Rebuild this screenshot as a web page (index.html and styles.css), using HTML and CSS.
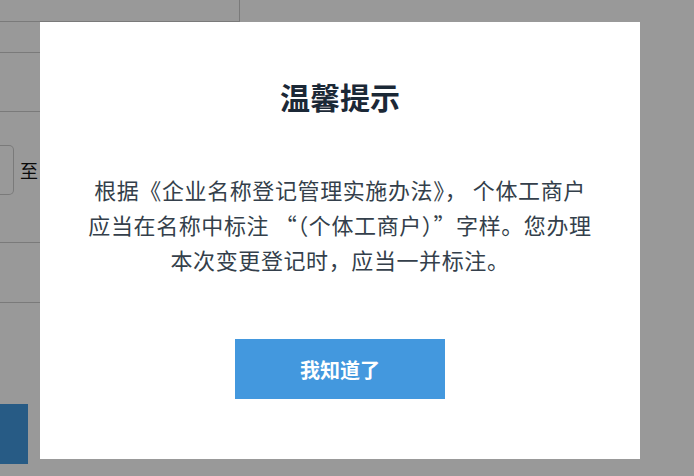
FILE: index.html
```html
<!DOCTYPE html>
<html lang="zh-CN">
  <head>
    <meta charset="UTF-8" />
    <meta name="viewport" content="width=device-width, initial-scale=1.0" />
    <title>变更登记</title>
    <link rel="stylesheet" href="styles.css">
  </head>
  <body>
    <div class="page">
      <div class="topbar"></div>
      <div class="row row-a"></div>
      <div class="row row-b"></div>
      <div class="row row-c">
        <div class="date-input"></div>
        <span class="to">至</span>
      </div>
      <div class="row row-d"></div>
      <div class="actions">
        <button class="btn-submit"></button>
      </div>
    </div>

    <div class="mask">
      <div class="dialog">
        <h2 class="dialog-title">温馨提示</h2>
        <p class="dialog-text">
          根据《企业名称登记管理实施办法》，&nbsp;个体工商户<br />
          应当在名称中标注 “（个体工商户）”字样。您办理<br />
          本次变更登记时，应当一并标注。
        </p>
        <button class="dialog-btn">我知道了</button>
      </div>
    </div>
  </body>
</html>
```

FILE: styles.css
```css
* {
  box-sizing: border-box;
  margin: 0;
  padding: 0;
}

body {
  font-family: "Noto Sans CJK SC", "Noto Sans", sans-serif;
  background: #fff;
  color: #333;
  height: 100vh;
  overflow: hidden;
}

.page {
  width: 300px;
}

.topbar {
  width: 240px;
  height: 22px;
  border-right: 1px solid #ccc;
  border-bottom: 1px solid #ccc;
}

.row {
  border-bottom: 1px solid #ccc;
}

.row-a {
  height: 31px;
}

.row-b {
  height: 59px;
}

.row-c {
  height: 131px;
  display: flex;
  align-items: center;
  gap: 6px;
  padding-bottom: 14px;
}

.date-input {
  width: 14px;
  height: 50px;
  border: 1px solid #ccc;
  border-left: none;
  border-radius: 0 5px 5px 0;
}

.to {
  font-size: 18px;
  color: #111;
}

.row-d {
  height: 60px;
}

.actions {
  padding-top: 101px;
}

.btn-submit {
  display: block;
  width: 28px;
  height: 60px;
  border: none;
  background: #4298de;
}

.mask {
  position: fixed;
  inset: 0;
  background: rgba(0, 0, 0, 0.4);
}

.dialog {
  position: absolute;
  top: 22px;
  left: 40px;
  width: 600px;
  height: 437px;
  background: #fff;
  padding: 54px 40px 60px;
  display: flex;
  flex-direction: column;
  align-items: center;
  text-align: center;
}

.dialog-title {
  font-size: 30px;
  line-height: 40px;
  font-weight: bold;
  color: #1b2836;
}

.dialog-text {
  margin-top: 56px;
  font-size: 22px;
  line-height: 35px;
  letter-spacing: 0.6px;
  color: #343f4b;
  white-space: nowrap;
}

.dialog-btn {
  margin-top: 62px;
  width: 210px;
  height: 60px;
  border: none;
  background: #4398de;
  color: #fff;
  font-family: inherit;
  font-size: 20px;
  font-weight: bold;
  cursor: pointer;
}
```
